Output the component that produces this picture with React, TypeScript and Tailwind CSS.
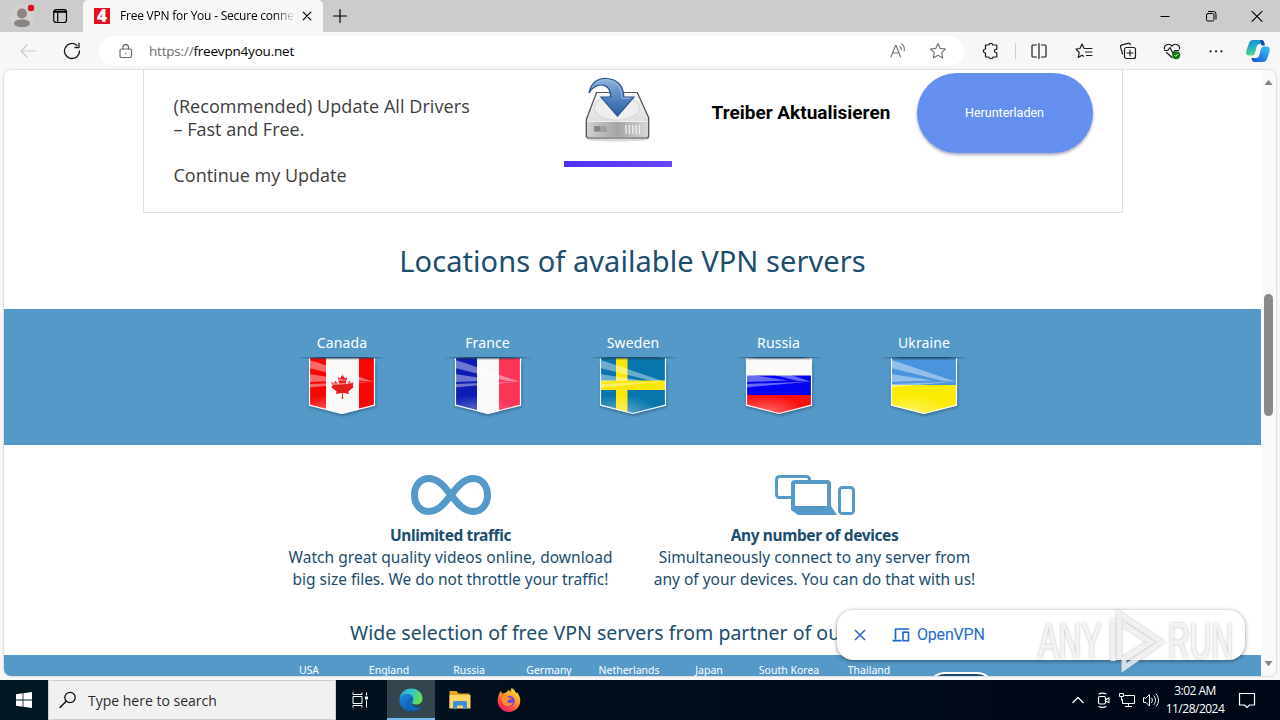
import type { ReactNode } from "react";
import { FaCanadianMapleLeaf } from "react-icons/fa";

const COUNTRIES = ["Canada", "France", "Sweden", "Russia", "Ukraine"] as const;
type Country = (typeof COUNTRIES)[number];

const PARTNERS = ["USA", "England", "Russia", "Germany", "Netherlands", "Japan", "South Korea", "Thailand"];

interface IconProps {
  children: ReactNode;
  className?: string;
  size?: number;
}

function Icon({ children, className = "", size = 16 }: IconProps) {
  return (
    <svg
      width={size}
      height={size}
      viewBox={`0 0 ${size} ${size}`}
      fill="none"
      stroke="currentColor"
      strokeLinecap="round"
      strokeLinejoin="round"
      className={`shrink-0 ${className}`}
    >
      {children}
    </svg>
  );
}

/* ---------- browser chrome ---------- */

function TitleBar() {
  return (
    <div className="flex h-8 shrink-0 bg-[#cccccc] text-black">
      <div className="flex w-[83px] items-center rounded-br-[4px] pl-[10px]">
        <Icon size={26} className="-mt-px">
          <circle cx="12" cy="13" r="12" fill="#d3d1d0" stroke="none" />
          <circle cx="12" cy="10.500" r="5" fill="#8a8583" stroke="none" />
          <path d="M4 20.500c0-3 3.500-4 8-4s8 1 8 4c0 2-3.500 3.700-8 3.700s-8-1.700-8-3.700z" fill="#8a8583" stroke="none" />
          <circle cx="21" cy="5" r="3.200" fill="#d6101c" stroke="none" />
        </Icon>
        <Icon size={16} className="ml-[16px]">
          <rect x="1.700" y="1.700" width="12.800" height="12.800" rx="2.500" strokeWidth="1.200" />
          <path d="M2 3.800h12" strokeWidth="2" />
          <path d="M5.700 5v9" strokeWidth="1.200" />
        </Icon>
      </div>
      <div className="flex w-[240px] items-center rounded-t-[5px] bg-[#f7f7f7] pl-[11px]">
        <div className="flex h-4 w-4 items-center justify-center bg-[#e3101c] font-['Open_Sans',sans-serif] text-[17px] leading-4 font-extrabold text-white">
          4
        </div>
        <div className="ml-[10px] w-[176px] [mask-image:linear-gradient(to_right,black_155px,transparent_175px)] font-['Open_Sans',sans-serif] text-[12px] tracking-[-0.22px] whitespace-nowrap">
          Free VPN for You - Secure conne
        </div>
        <Icon size={10} className="ml-[6px]">
          <path d="M1.200 1.200l7.600 7.600M8.800 1.200L1.200 8.800" strokeWidth="1.200" />
        </Icon>
      </div>
      <Icon size={16} className="mt-2 ml-[9px]">
        <path d="M8 1.500v13M1.500 8h13" strokeWidth="1.200" />
      </Icon>
      <div className="ml-auto flex items-center gap-[34px] pr-[17px]">
        <Icon size={12}>
          <path d="M1.500 6.500h9" strokeLinecap="butt" />
        </Icon>
        <Icon size={12}>
          <rect x="1.500" y="3.500" width="7.500" height="7.500" rx="1.500" />
          <path d="M3.500 1.500h5a2.500 2.500 0 0 1 2.500 2.500v5" />
        </Icon>
        <Icon size={12}>
          <path d="M1 1.300l10 10M11 1.300L1 11.300" strokeWidth="1.100" />
        </Icon>
      </div>
    </div>
  );
}

function Copilot() {
  return (
    <svg width="24" height="24" viewBox="0 0 24 24" className="shrink-0">
      <defs>
        <linearGradient id="cp1" x1="0" y1="0" x2="0.300" y2="1">
          <stop offset="0" stopColor="#1c86d6" />
          <stop offset="0.500" stopColor="#20b0c8" />
          <stop offset="1" stopColor="#5cd67c" />
        </linearGradient>
        <linearGradient id="cp2" x1="1" y1="0" x2="0" y2="1">
          <stop offset="0" stopColor="#3dc4f2" />
          <stop offset="1" stopColor="#1650d8" />
        </linearGradient>
      </defs>
      <path d="M7 1h8c2.500 0 3 1.500 3.600 4H14c-2 0-2.800 1-3.400 3L9 14c-.6 2-1.600 2.500-3.500 2.500H3C0 16.500-.2 13.500.6 11L3 4c.7-2 2-3 4-3z" fill="url(#cp1)" />
      <path d="M17 23H9c-2.500 0-3-1.500-3.600-4H10c2 0 2.800-1 3.400-3L15 10c.6-2 1.600-2.500 3.500-2.500H21c3 0 3.200 3 2.400 5.500L21 20c-.7 2-2 3-4 3z" fill="url(#cp2)" />
      <path d="M14 1h1.500c2.300 0 2.800 2 3.400 5.500H15.500z" fill="#124fae" />
    </svg>
  );
}

function Toolbar() {
  return (
    <div className="flex h-[38px] shrink-0 items-center bg-[#f7f7f7] text-[#1b1b1b]">
      <Icon size={18} className="ml-[19px] text-[#c9c9c9]">
        <path d="M2 9h15M8 3L2 9l6 6" strokeWidth="1.200" />
      </Icon>
      <Icon size={18} className="ml-[26px]">
        <path d="M16.500 9A7.500 7.500 0 1 1 14 3.400M16 1.500v4h-4" strokeWidth="1.300" />
      </Icon>
      <div className="ml-[18px] flex h-[30px] w-[865px] items-center rounded-full bg-white pl-[20px]">
        <Icon size={14} className="text-[#6b6b6b]">
          <rect x="1" y="5" width="11.500" height="8.500" rx="1.500" strokeWidth="1.200" />
          <path d="M4 5V3.300a2.700 2.700 0 0 1 5.500 0V5M6.700 9.200v.4" strokeWidth="1.200" />
        </Icon>
        <div className="ml-[16px] font-['Open_Sans',sans-serif] text-[13.500px] tracking-[-0.2px] text-black">
          <span className="text-[#6d6d6d]">https://</span>freevpn4you.net
        </div>
        <Icon size={18} className="ml-auto text-[#737373]">
          <path d="M2 15L6.500 3.500h.6L11.500 15M3.600 11h6.500M11 4.500c1 .8 1.500 2 1.300 3.500M12.500 1.800c2.200 1.500 3.200 4 2.700 7" strokeWidth="1.100" />
        </Icon>
        <Icon size={18} className="mr-[17px] ml-[22px] text-[#737373]">
          <path d="M9 1.500l2.200 4.900 5.300.6-3.900 3.600 1.100 5.300L9 13.200l-4.700 2.700 1.100-5.300L1.500 7l5.300-.6z" strokeWidth="1.100" />
        </Icon>
      </div>
      <Icon size={18} className="ml-[18px]">
        <path
          d="M3.500 3h3.200a2.100 2.100 0 0 1 4.100 0h4v4.200c-2.800-.6-3.400 3.600 0 3.600V15h-3.700c-.5 2.200-3.900 2.200-4.300 0H3.500v-4C.7 11 .7 7 3.500 7z"
          strokeWidth="1.200"
        />
      </Icon>
      <div className="ml-[15px] h-4 w-px bg-[#d0d0d0]" />
      <Icon size={18} className="ml-[14px]">
        <path d="M6.500 3H3a1 1 0 0 0-1 1v10a1 1 0 0 0 1 1h3.500M11.500 3H15a1 1 0 0 1 1 1v10a1 1 0 0 1-1 1h-3.500M9 1.500v15" strokeWidth="1.200" />
      </Icon>
      <Icon size={18} className="ml-[27px]">
        <path d="M9.500 6.500h-.4L7 2 5 6.500 1 7l3.200 3.500-1 5L7 13.200l1.600 1M10.500 6.500H17M10.500 10H17M11.500 13.500H17" strokeWidth="1.200" />
      </Icon>
      <Icon size={18} className="ml-[26px]">
        <path d="M3.500 12L1.600 5.200a2 2 0 0 1 1.400-2.400L9 1.300a2 2 0 0 1 2.400 1.400" strokeWidth="1.200" />
        <rect x="5.500" y="5.500" width="11" height="11" rx="2" strokeWidth="1.200" />
        <path d="M11 8v6M8 11h6" strokeWidth="1.200" />
      </Icon>
      <Icon size={18} className="ml-[26px]">
        <path d="M1.500 7C.5 3 6 .5 9 4c3-3.500 8.500-1 7.500 3M3.500 10.500L9 15.500M1.500 8.500h3.300L7 5.500l3 6 1.700-3h4" strokeWidth="1.200" />
        <circle cx="13.200" cy="13.200" r="4" fill="#107c10" stroke="none" />
        <path d="M11.700 13.300l1 1 2-2" stroke="white" strokeWidth="0.900" />
      </Icon>
      <Icon size={18} className="ml-[26px]">
        <path d="M3.500 9.300h.1M9 9.300h.1M14.400 9.300h.1" strokeWidth="2.200" />
      </Icon>
      <div className="ml-[21px]">
        <Copilot />
      </div>
    </div>
  );
}

/* ---------- page ---------- */

function DriveIcon() {
  return (
    <svg width="68" height="68" viewBox="3.200 0 60 68" preserveAspectRatio="none" className="shrink-0">
      <defs>
        <linearGradient id="driveTop" x1="0" y1="0" x2="0" y2="1">
          <stop offset="0" stopColor="#f6f6f6" />
          <stop offset="1" stopColor="#d2d2d2" />
        </linearGradient>
        <linearGradient id="driveFront" x1="0" y1="0" x2="1" y2="0">
          <stop offset="0" stopColor="#d0d0d0" />
          <stop offset="0.500" stopColor="#a5a5a5" />
          <stop offset="1" stopColor="#d5d5d5" />
        </linearGradient>
        <linearGradient id="arrow" x1="0" y1="0" x2="0" y2="1">
          <stop offset="0" stopColor="#8fb2db" />
          <stop offset="0.600" stopColor="#4b7ebb" />
          <stop offset="1" stopColor="#2c5c9c" />
        </linearGradient>
      </defs>
      <ellipse cx="35" cy="63" rx="28" ry="2.500" fill="#d9d9d9" />
      <path d="M16 16.500h36l10 25V60a2 2 0 0 1-2 2H9a2 2 0 0 1-2-2V43.500z" fill="url(#driveTop)" stroke="#555" strokeWidth="1.200" />
      <ellipse cx="34" cy="32" rx="20" ry="12" fill="#eeeeee" stroke="#d8d8d8" />
      <path d="M8 46h53v13a2 2 0 0 1-2 2H10a2 2 0 0 1-2-2z" fill="url(#driveFront)" />
      <path d="M8 45.500h53" stroke="#eeeeee" />
      <path d="M14 50h11v6H14z" fill="#a0a0a0" />
      <path d="M14 50h5v5h-5z" fill="#858585" />
      <path d="M42 49v9M45 49v9M48 49v9M51 49v9M54 49v9" stroke="#f1f1f1" strokeWidth="1.100" />
      <path d="M9.500 17C11 7 17 2 25 2.500c9 .5 15 7 15 18.500h9L34.500 40 20 21h8.500C28.500 13 25 9 20 9c-4.500 0-8 3-10.500 8z" fill="url(#arrow)" stroke="#2b568d" strokeWidth="1.200" />
      <path d="M12 11.500C15 6 19 3.800 25 4c8 .5 13.500 7 13.500 18.200h7.300" fill="none" stroke="#a9c5e6" strokeWidth="0.800" />
    </svg>
  );
}

function AdCard() {
  return (
    <div className="mx-auto flex h-[143px] w-[980px] shrink-0 border-x border-b border-[#dedede]">
      <div className="w-[420px] pt-[25px] pl-[30px] font-['Open_Sans',sans-serif] text-[18px] leading-[23px] text-[#3d3d3d]">
        <p className="tracking-[0.07px]">(Recommended) Update All Drivers</p>
        <p>– Fast and Free.</p>
        <p className="mt-[23px]">Continue my Update</p>
      </div>
      <div className="flex w-[108px] flex-col items-center">
        <div className="mt-[6px] -ml-1">
          <DriveIcon />
        </div>
        <div className="mt-[17px] h-[6px] w-full bg-gradient-to-r from-[#5130ee] to-[#6a45fb]" />
      </div>
      <div className="ml-[40px] w-[205px] pt-[31px] font-[Roboto,sans-serif] text-[19px] leading-6 font-bold whitespace-nowrap text-black">
        Treiber Aktualisieren
      </div>
      <div className="mt-[3px] flex h-20 w-44 items-center justify-center rounded-[40px] bg-[#648fef] font-[Roboto,sans-serif] text-[12.500px] text-white shadow-[0_2px_3px_rgba(60,60,120,0.45)]">
        Herunterladen
      </div>
    </div>
  );
}

function FlagField({ country }: { country: Country }) {
  switch (country) {
    case "Canada":
      return (
        <>
          <path d="M0 0h66v56H0z" fill="#fbf9f7" />
          <path d="M0 0h17v56H0zM50 0h16v56H50z" fill="#f80606" />
          <FaCanadianMapleLeaf x={21} y={16} size={25} color="#e61b1b" />
        </>
      );
    case "France":
      return (
        <>
          <path d="M0 0h22v56H0z" fill="#0c1cb4" />
          <path d="M22 0h22v56H22z" fill="#fbf9f7" />
          <path d="M44 0h22v56H44z" fill="#fb3558" />
        </>
      );
    case "Sweden":
      return (
        <>
          <path d="M0 0h66v56H0z" fill="#0876ad" />
          <path d="M16 0h11.500v56H16zM0 22.500h66V32H0z" fill="#fbe60a" />
        </>
      );
    case "Russia":
      return (
        <>
          <path d="M0 0h66v18H0z" fill="#fbf9f7" />
          <path d="M0 17.500h66V37H0z" fill="#0404f2" />
          <path d="M0 37h66v19H0z" fill="#fa0f0f" />
        </>
      );
    case "Ukraine":
      return (
        <>
          <path d="M0 0h66v28H0z" fill="#4a93dd" />
          <path d="M0 27h66v29H0z" fill="#fcec05" />
        </>
      );
  }
}

function Flag({ country }: { country: Country }) {
  const id = country.toLowerCase();
  return (
    <svg width="92" height="66" viewBox="-13 -4 92 66">
      <defs>
        <clipPath id={`${id}-clip`}>
          <path d="M0 0h66v47.500L33 56 0 47.500z" />
        </clipPath>
        <linearGradient id={`${id}-edge`}>
          <stop offset="0" stopColor="#1d4565" stopOpacity="0" />
          <stop offset="0.250" stopColor="#1d4565" stopOpacity="0.900" />
          <stop offset="0.750" stopColor="#1d4565" stopOpacity="0.900" />
          <stop offset="1" stopColor="#1d4565" stopOpacity="0" />
        </linearGradient>
        <radialGradient id={`${id}-glow`} cx="0.300" cy="1" r="0.600">
          <stop offset="0" stopColor="white" stopOpacity="0.400" />
          <stop offset="1" stopColor="white" stopOpacity="0" />
        </radialGradient>
        <filter id={`${id}-blur`}>
          <feGaussianBlur stdDeviation="1.500" />
        </filter>
      </defs>
      <path d="M0 4h67v45L34 58 0 49z" fill="#1d4565" opacity="0.500" filter={`url(#${id}-blur)`} />
      <g clipPath={`url(#${id}-clip)`}>
        <FlagField country={country} />
        <path d="M0 26L66 24.500V56H0z" fill={`url(#${id}-glow)`} />
        <path d="M0 2l10 3 54 18.500-12-.5L0 10zM0 16l42 6.500L0 24zM0 26l66-2.500L0 29.500z" fill="white" opacity="0.400" />
        <path d="M0 0h66v2H0z" fill="#333" opacity="0.180" />
      </g>
      <path d="M0.500 0v47.200L33 55.500l32.500-8.300V0" fill="none" stroke="#f4f8fb" strokeWidth="1.200" />
      <path d="M-12 -1h90v1.500h-90z" fill={`url(#${id}-edge)`} />
    </svg>
  );
}

function InfinityLogo() {
  return (
    <svg width="80" height="40" viewBox="0 0 80 40" fill="none" stroke="#5599c8" strokeWidth="7">
      <path d="M40 20C33 11 27 3.500 17.500 3.500 9 3.500 3.500 11 3.500 20S9 36.500 17.500 36.500C27 36.500 33 29 40 20S53 3.500 62.500 3.500C71 3.500 76.500 11 76.500 20S71 36.500 62.500 36.500C53 36.500 47 29 40 20z" />
    </svg>
  );
}

function DevicesLogo() {
  return (
    <svg width="80" height="40" viewBox="0 0 80 40" fill="none" stroke="#5599c8">
      <rect x="1.500" y="1.500" width="33" height="21" rx="3" strokeWidth="3" />
      <rect x="18" y="7" width="36" height="26" rx="2" strokeWidth="4" fill="white" />
      <path d="M16 31h40l6 9H23l-7-5z" fill="#5599c8" stroke="none" />
      <rect x="64.500" y="12.500" width="14" height="26" rx="3" strokeWidth="3" />
    </svg>
  );
}

interface FeatureProps {
  logo: ReactNode;
  title: string;
  children: ReactNode;
}

function Feature({ logo, title, children }: FeatureProps) {
  return (
    <div className="flex w-[364px] flex-col items-center text-center text-[15.500px] leading-[22px] whitespace-nowrap">
      {logo}
      <h3 className="mt-[9px] text-[15.500px] font-bold tracking-[-0.4px]">{title}</h3>
      {children}
    </div>
  );
}

function Page() {
  return (
    <div className="flex h-full w-[1257px] flex-col overflow-hidden bg-white font-['Noto_Sans',sans-serif] text-[#1b4d6e]">
      <AdCard />
      <h1 className="mt-[30px] h-[66px] shrink-0 text-center text-[29px] leading-[36px] tracking-[0.06px] whitespace-nowrap">
        Locations of available VPN servers
      </h1>
      <div className="flex h-[136px] shrink-0 justify-center bg-[#5599c8] pt-[24px] pl-px">
        {COUNTRIES.map((c) => (
          <div key={c} className="flex w-[145.500px] flex-col items-center text-[14px] leading-[20px] tracking-[0.1px] text-white">
            <span className="mb-px">{c}</span>
            <Flag country={c} />
          </div>
        ))}
      </div>
      <div className="mt-[30px] flex shrink-0 justify-center">
        <Feature logo={<InfinityLogo />} title="Unlimited traffic">
          <p className="tracking-[0.05px]">Watch great quality videos online, download</p>
          <p className="tracking-[-0.03px]">big size files. We do not throttle your traffic!</p>
        </Feature>
        <Feature logo={<DevicesLogo />} title="Any number of devices">
          <p>Simultaneously connect to any server from</p>
          <p>any of your devices. You can do that with us!</p>
        </Feature>
      </div>
      <h2 className="mt-[28px] h-[37px] shrink-0 pl-[346px] text-[19.500px] leading-[30px] tracking-[0.02px] whitespace-nowrap">
        Wide selection of free VPN servers from partner of ou
      </h2>
      <div className="flex h-[21px] shrink-0 overflow-hidden bg-[#5599c8] pl-[265px] text-[10.500px] leading-[11px] text-white">
        {PARTNERS.map((name) => (
          <span key={name} className="w-20 pt-[10px] text-center whitespace-nowrap">
            {name}
          </span>
        ))}
        <div className="mt-[17px] ml-[18px] h-[50px] w-[68px] rounded-[18px] border-2 border-white bg-[#1b4d6e]" />
      </div>
    </div>
  );
}

function Scrollbar() {
  return (
    <div className="flex w-[15px] flex-col items-center bg-[#fafafa] pt-[8px] pb-[8px]">
      <Icon size={9}>
        <path d="M0.500 7L4.500 1.800 8.500 7z" fill="#858585" stroke="none" />
      </Icon>
      <div className="mt-[207px] h-[122px] w-[9px] rounded-full bg-[#8a8a8a]" />
      <Icon size={9} className="mt-auto">
        <path d="M0.500 2L4.500 7.200 8.500 2z" fill="#858585" stroke="none" />
      </Icon>
    </div>
  );
}

function DownloadToast() {
  return (
    <div className="absolute top-[610px] left-[837px] flex h-[50px] w-[408px] items-center rounded-[16px] bg-white pl-[16px] text-[#1f67d2] shadow-[0_1px_4px_rgba(0,0,0,0.45)]">
      <Icon size={14}>
        <path d="M2 2l10 10M12 2L2 12" strokeWidth="1.500" strokeLinecap="butt" />
      </Icon>
      <Icon size={18} className="ml-[25px]">
        <path d="M17 3H3.500v10.500M0.500 14.700h9" strokeWidth="1.700" strokeLinecap="butt" />
        <rect x="11" y="6.200" width="5.500" height="8.500" strokeWidth="1.600" strokeLinejoin="miter" />
      </Icon>
      <span className="ml-[7px] font-[Roboto,sans-serif] text-[16px] tracking-[-0.2px]">OpenVPN</span>
    </div>
  );
}

function Watermark() {
  return (
    <div className="pointer-events-none absolute top-[609px] left-[1038px] flex h-[64px] w-[198px] items-center font-['Liberation_Sans',sans-serif] text-[51px] leading-none text-white/75 [filter:drop-shadow(0_0_1.500px_rgba(110,110,110,0.6))]">
      <span className="w-[70px] origin-left scale-x-[0.61]">ANY</span>
      <svg width="58" height="64" viewBox="0 0 58 64" fill="none" stroke="white" strokeOpacity="0.750" strokeWidth="5" className="shrink-0">
        <path d="M5 52V10M11 49V5L53 33 16 59v-9l27-17-27-17" />
      </svg>
      <span className="ml-[2px] w-[66px] origin-left scale-x-[0.59]">RUN</span>
    </div>
  );
}

/* ---------- taskbar ---------- */

function EdgeLogo() {
  return (
    <svg width="24" height="24" viewBox="0 0 24 24">
      <defs>
        <linearGradient id="edgeTop" x1="0" y1="0" x2="1" y2="0.300">
          <stop offset="0" stopColor="#2aa7e0" />
          <stop offset="0.600" stopColor="#35c7c0" />
          <stop offset="1" stopColor="#66dd58" />
        </linearGradient>
        <linearGradient id="edgeBottom" x1="0" y1="0" x2="0.800" y2="1">
          <stop offset="0" stopColor="#1b8cdc" />
          <stop offset="1" stopColor="#0b53a4" />
        </linearGradient>
      </defs>
      <path d="M0.500 12C.5 5 6 .5 12 .5 19 .5 23.500 5 23.500 10.500c0 4-3 6-6.500 6-3 0-4-1.200-4-2.200 0-.8 1.200-1.300 1.200-3.300C14.200 8 11 6 8 6 4 6 1 8.500.5 12z" fill="url(#edgeTop)" />
      <path d="M.5 12C1 8 4 6 8 6c3 0 6 2 6.200 5-3-1.500-6 .5-6 4 0 4 3.500 7 7.800 7 1.500 0 3-.4 4.500-1.200C18.500 22.800 15.500 23.500 12 23.500 5.500 23.500.5 18.500.5 12z" fill="url(#edgeBottom)" />
      <path d="M14.200 11c-3-1.500-6 .5-6 4 0 4 3.500 7.500 8.300 7.200 2.500-.3 4.500-1.700 5.800-3.800-5 2.500-9.500 0-9.300-4.100 0-.8 1.200-1.300 1.200-3.300z" fill="#1068bd" />
    </svg>
  );
}

function ExplorerLogo() {
  return (
    <svg width="22" height="20" viewBox="0 0 22 20">
      <path d="M.5 1h7l2 2.500h11V18H.5z" fill="#e9a520" />
      <path d="M.5 5h21v13.500H.5z" fill="#fcd667" />
      <path d="M4 19v-6.500A1.500 1.500 0 0 1 5.500 11h11a1.500 1.500 0 0 1 1.500 1.500V19h-4v-3.500H8V19z" fill="#3f8fd6" />
    </svg>
  );
}

function FirefoxLogo() {
  return (
    <svg width="24" height="24" viewBox="0 0 24 24">
      <defs>
        <linearGradient id="fox" x1="0.800" y1="0" x2="0.200" y2="1">
          <stop offset="0" stopColor="#ffe845" />
          <stop offset="0.400" stopColor="#ff9a2a" />
          <stop offset="0.750" stopColor="#fb3c4a" />
          <stop offset="1" stopColor="#e31c7d" />
        </linearGradient>
      </defs>
      <path d="M3.500 3l2.300 3c1-1 2-1.300 3.500-1.500C10 3.500 11 2.500 12.300 2l.8 2.500L14.500 0c3 1.500 4 4 5 5.500l.5-1.500c2 3 3.300 5.500 3.300 8.500C23.300 19 18.300 24 12 24S.7 19 .7 12.700C.7 9 2 6 3.500 3z" fill="url(#fox)" />
      <circle cx="12.500" cy="13" r="5.300" fill="#7a43e0" />
      <path d="M5.500 8.500c2-.8 5-.5 6.500 1.200l2.500.2c-.5 1.500-2.500 1.700-3 2-.8.500-.6 1.200-1.200 1.800 1 2 4 2.200 6 .6-1 4-8 5.500-10.500.7-.8-2-.8-4.500-.3-6.500z" fill="#ff9329" />
    </svg>
  );
}

function Taskbar() {
  return (
    <div className="flex h-10 shrink-0 items-center bg-gradient-to-r from-[#001822] via-[#010d1a] to-[#000615] text-white">
      <div className="flex w-12 justify-center">
        <svg width="16" height="16" viewBox="0 0 16 16" fill="white">
          <path d="M0 2.200L6.600 1.300v6.300H0zM7.400 1.200L16 0v7.600H7.400zM0 8.400h6.600v6.300L0 13.800zM7.400 8.400H16V16l-8.600-1.200z" />
        </svg>
      </div>
      <div className="flex h-10 w-72 items-center border border-[#cfcfcf] bg-[#f1f1f1] pl-[10px] text-[#2b2b2b]">
        <Icon size={18} className="text-black">
          <circle cx="11" cy="6.500" r="5.200" strokeWidth="1.200" />
          <path d="M7.200 10.300L1 16.500" strokeWidth="1.300" />
        </Icon>
        <span className="ml-[11px] font-['Open_Sans',sans-serif] text-[14px]">Type here to search</span>
      </div>
      <div className="flex w-[51px] pl-[15px]">
        <Icon size={18}>
          <path d="M2 1.500v2h9v-2M2 16.500v-2h9v2M2 5.500h9v7H2zM15.500 1.500v3M15.500 9.500v7" strokeLinecap="butt" strokeLinejoin="miter" />
          <path d="M14 5.500h3v3h-3z" fill="white" stroke="none" />
        </Icon>
      </div>
      <div className="flex h-10 w-12 items-center justify-center border-b-2 border-[#76b9ed] bg-[#33454e] pt-[2px]">
        <EdgeLogo />
      </div>
      <div className="flex w-[49px] justify-center">
        <ExplorerLogo />
      </div>
      <div className="flex w-[49px] justify-center">
        <FirefoxLogo />
      </div>
      <div className="ml-auto flex items-center">
        <Icon size={14}>
          <path d="M1.500 10L7 4.500l5.500 5.500" strokeWidth="1.200" strokeLinecap="butt" />
        </Icon>
        <Icon size={16} className="ml-[11px]">
          <rect x="2.500" y="4.500" width="7" height="7.500" rx="1.500" strokeWidth="1.200" />
          <path d="M10 7.500l3-1.700v5l-3-1.600M3 2c1.500-1.200 5.500-1.200 7 0M3 14.500c1.500 1.200 5.500 1.200 7 0" strokeWidth="1.100" />
        </Icon>
        <Icon size={18} className="ml-[6px]">
          <path d="M6.500 4.500H16.500v8h-12V8M10.500 12.500v3M7 15.500h7M1.500 2.500h4v3h-4zM3.500 5.500v4" strokeLinecap="butt" strokeLinejoin="miter" />
        </Icon>
        <Icon size={18} className="ml-[6px]">
          <path d="M1.500 7v4.500H4l3.500 3.500V3.500L4 7zM9.700 7c1 1.300 1 3.200 0 4.500M12 5c2 2.300 2 6.200 0 8.500M14.300 3.200c3 3.300 3 8.800 0 12" strokeWidth="1" />
        </Icon>
        <div className="ml-[4px] w-[62px] text-center font-['Open_Sans',sans-serif] text-[12px] leading-[18px] tracking-[-0.5px]">
          <div>3:02 AM</div>
          <div>11/28/2024</div>
        </div>
        <Icon size={18} className="mr-[24px] ml-[12px]">
          <path d="M1.500 2.500h15v11.500h-5L9 16.500 6.500 14h-5z" strokeWidth="1.200" strokeLinejoin="miter" />
        </Icon>
      </div>
    </div>
  );
}

export default function App() {
  return (
    <div className="relative flex h-[720px] w-[1280px] flex-col overflow-hidden bg-[#f7f7f7]">
      <TitleBar />
      <Toolbar />
      <div className="mx-[4px] mb-[4px] flex h-[606px] shrink-0 overflow-hidden rounded-[7px] shadow-[0_0_2px_rgba(0,0,0,0.3)]">
        <Page />
        <Scrollbar />
      </div>
      <Taskbar />
      <DownloadToast />
      <Watermark />
    </div>
  );
}
